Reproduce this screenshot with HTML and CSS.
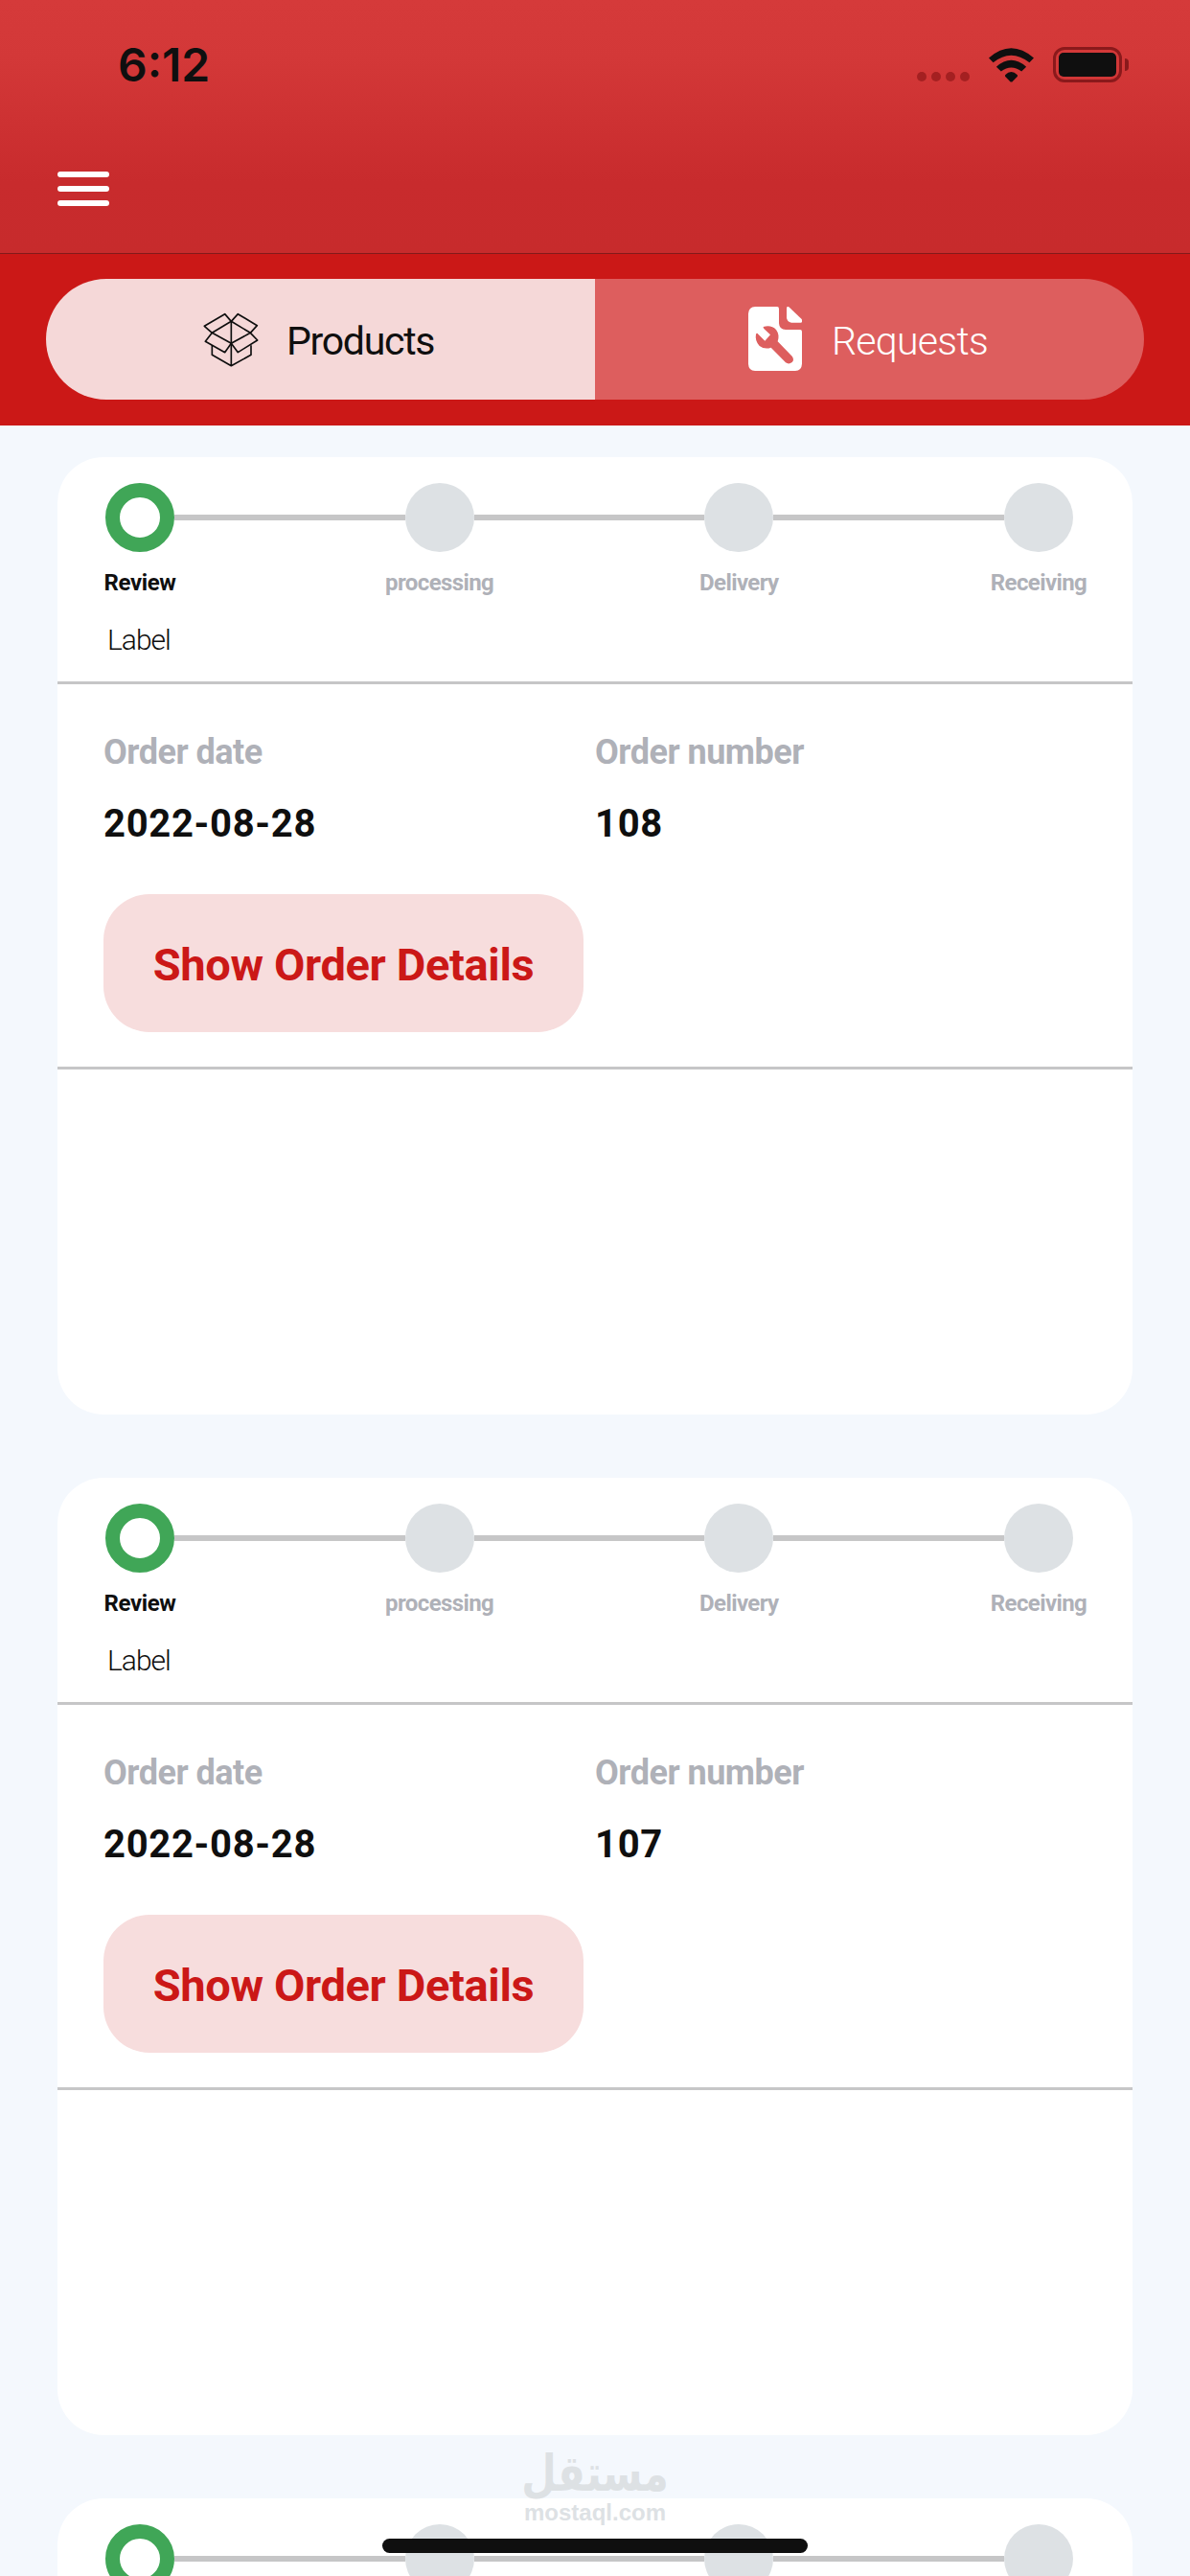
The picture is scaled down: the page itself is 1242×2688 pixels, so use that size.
FILE: index.html
```html
<!DOCTYPE html>
<html lang="en">
<head>
  <meta charset="UTF-8" />
  <meta name="viewport" content="width=device-width, initial-scale=1.0"/>
  <title>Orders</title>
  <link rel="stylesheet" href="styles.css">
</head>
<body>

  <header class="header">
    <div class="status-bar">
      <span class="time">6:12</span>
      <div class="status-icons">
        <div class="dots"><i></i><i></i><i></i><i></i></div>
        <svg class="wifi" viewBox="305 87 143 108">
          <path d="M305 118Q376 56 448 118L434 133Q376 87 319 133Z"/>
          <path d="M329 146Q376 104 424 146L409 161Q376 136 344 161Z"/>
          <path d="M357 172Q376 153 396 172V177L379 194H374L357 177Z"/>
        </svg>
        <div class="battery"><span></span></div>
        <div class="battery-tip"></div>
      </div>
    </div>
    <button class="menu" aria-label="Menu"><span></span><span></span><span></span></button>
  </header>

  <nav class="tab-bar">
    <div class="tabs">
      <div class="tab active">
        <svg class="icon-box" viewBox="64 195 174 171">
          <path d="M152 223L132 200L68 238L92 259ZM152 223L173 200L233 236L212 259ZM92 259L71 286L132 320L152 292ZM212 259L234 282L173 320L152 292Z"/>
          <path d="M92 298V328L152 362L214 328V298M152 223V362"/>
        </svg>
        <span>Products</span>
      </div>
      <div class="tab">
        <svg class="icon-doc" viewBox="123 180 168 201">
          <path d="M145 180H213Q219 180 219 187V232Q220 252 240 252H285Q291 252 291 258V359Q290 380 270 381H144Q124 380 123 359V202Q124 181 145 180Z"/>
          <path d="M243 185Q244 177 250 181L290 219Q294 230 287 230H258Q244 229 243 214Z"/>
          <path class="wrench" d="M170 243Q195 236 210 252Q222 268 215 289L260 335Q268 346 260 354Q250 362 240 355L194 308Q175 315 158 303Q143 286 147 266Q150 261 154 266L175 287L192 268L172 249Q169 245 170 243Z"/>
        </svg>
        <span>Requests</span>
      </div>
    </div>
  </nav>

  <main class="orders">
    <section class="card">
      <div class="progress">
        <div class="steps">
          <div class="step current"><i></i><span>Review</span></div>
          <div class="line"></div>
          <div class="step"><i></i><span>processing</span></div>
          <div class="line"></div>
          <div class="step"><i></i><span>Delivery</span></div>
          <div class="line"></div>
          <div class="step"><i></i><span>Receiving</span></div>
        </div>
        <div class="label">Label</div>
      </div>
      <div class="info">
        <dl>
          <div><dt>Order date</dt><dd>2022-08-28</dd></div>
          <div><dt>Order number</dt><dd>108</dd></div>
        </dl>
        <button class="details">Show Order Details</button>
      </div>
    </section>

    <section class="card">
      <div class="progress">
        <div class="steps">
          <div class="step current"><i></i><span>Review</span></div>
          <div class="line"></div>
          <div class="step"><i></i><span>processing</span></div>
          <div class="line"></div>
          <div class="step"><i></i><span>Delivery</span></div>
          <div class="line"></div>
          <div class="step"><i></i><span>Receiving</span></div>
        </div>
        <div class="label">Label</div>
      </div>
      <div class="info">
        <dl>
          <div><dt>Order date</dt><dd>2022-08-28</dd></div>
          <div><dt>Order number</dt><dd>107</dd></div>
        </dl>
        <button class="details">Show Order Details</button>
      </div>
    </section>

    <section class="card cut">
      <div class="progress">
        <div class="steps">
          <div class="step current"><i></i></div>
          <div class="line"></div>
          <div class="step"><i></i></div>
          <div class="line"></div>
          <div class="step"><i></i></div>
          <div class="line"></div>
          <div class="step"><i></i></div>
        </div>
      </div>
    </section>
  </main>

  <div class="watermark">
    <div class="ar" lang="ar" dir="rtl">مستقل</div>
    <div class="en">mostaql.com</div>
  </div>
  <div class="home-indicator"></div>

</body>
</html>
```
FILE: styles.css
```css
* {
  box-sizing: border-box;
}

body {
  margin: 0;
  height: 2688px;
  overflow: hidden;
  position: relative;
  background: #f4f8fd;
  color: #0f0f0f;
  font-family: Roboto, "Liberation Sans", sans-serif;
}

button {
  border: none;
  padding: 0;
  font-family: inherit;
}

/* header */
.header {
  height: 265px;
  background: linear-gradient(#d53a3a 0, #d33838 60px, #c82b2d 190px, #c72b2c 100%);
  border-bottom: 1px solid #831a1a;
}

.status-bar {
  height: 179px;
  padding: 0 64px 0 123px;
  display: flex;
  justify-content: space-between;
}

.time {
  margin-top: 39px;
  font: 600 48px/58px Inter, "Liberation Sans", sans-serif;
}

.status-icons {
  display: flex;
  align-items: center;
  height: 37px;
  margin-top: 49px;
}

.dots {
  display: flex;
  gap: 5px;
  margin: 25px 20px 0 0;
}

.dots i {
  width: 10px;
  height: 10px;
  border-radius: 50%;
  background: #a42021;
}

.wifi {
  width: 47px;
  height: 36px;
  margin-right: 20px;
  fill: #0f0f0f;
}

.battery {
  width: 72px;
  height: 37px;
  border: 3px solid #8a191b;
  border-radius: 12px;
  padding: 3px;
}

.battery span {
  display: block;
  height: 25px;
  border-radius: 5px;
  background: #0f0f0f;
}

.battery-tip {
  width: 4px;
  height: 13px;
  margin-left: 3px;
  border-radius: 0 4px 4px 0;
  background: #8a191b;
}

.menu {
  display: flex;
  flex-direction: column;
  gap: 9px;
  width: 54px;
  margin-left: 60px;
  background: none;
}

.menu span {
  width: 54px;
  height: 6px;
  border-radius: 3px;
  background: #fff;
}

/* tabs */
.tab-bar {
  height: 179px;
  padding: 26px 48px 27px;
  background: #cb1817;
}

.tabs {
  display: flex;
  height: 126px;
  border-radius: 63px;
  overflow: hidden;
}

.tab {
  width: 50%;
  display: flex;
  align-items: center;
  padding-left: 160px;
  background: #dd5e5e;
  color: #fff;
  font-size: 41px;
  font-weight: 300;
  line-height: 50px;
  letter-spacing: -0.7px;
}

.tab span {
  padding-top: 3px;
}

.tab.active {
  padding-left: 164px;
  background: #f5d8d8;
  color: #0f0f0f;
  font-weight: 400;
  letter-spacing: -1.3px;
}

.icon-box {
  width: 58px;
  height: 57px;
  margin-right: 29px;
  fill: none;
  stroke: #0f0f0f;
  stroke-width: 5;
  stroke-linejoin: round;
}

.icon-doc {
  width: 56px;
  height: 67px;
  margin: 0 31px 2px 0;
  fill: #fff;
}

.icon-doc .wrench {
  fill: #dd5e5e;
}

/* order cards */
.orders {
  display: flex;
  flex-direction: column;
  gap: 66px;
  padding: 33px 60px 0;
}

.card {
  flex: none;
  height: 999px;
  border-radius: 48px;
  background: #fff;
}

.progress {
  height: 237px;
  padding: 27px 62px 0 50px;
  border-bottom: 3px solid #c6c6c7;
}

/* last card, scrolled under the bottom edge */
.card.cut {
  height: 81px;
  border-radius: 48px 48px 0 0;
  overflow: hidden;
}

.cut .progress {
  height: 81px;
  border-bottom: none;
}

.steps {
  display: flex;
}

.line {
  flex: 1;
  height: 6px;
  margin-top: 33px;
  background: #c6c6c7;
}

.step {
  width: 72px;
  display: flex;
  flex-direction: column;
  align-items: center;
  color: #afb1b8;
  font-size: 24px;
  font-weight: 700;
  line-height: 30px;
}

.step i {
  width: 72px;
  height: 72px;
  margin-bottom: 17px;
  border-radius: 50%;
  background: #dde1e4;
}

.step span {
  letter-spacing: -0.6px;
}

.step.current {
  color: #0f0f0f;
}

.current i {
  border: 15px solid #40a657;
  background: #fff;
}

.current span {
  letter-spacing: -0.4px;
}

.label {
  margin: 25px 0 0 2px;
  font-size: 30px;
  font-weight: 300;
  line-height: 40px;
  letter-spacing: -1px;
}

.info {
  height: 402px;
  padding: 50px 48px 0;
  border-bottom: 3px solid #c6c6c7;
}

dl {
  display: grid;
  grid-template-columns: 1fr 1fr;
  height: 169px;
  margin: 0;
}

dt {
  color: #afb1b8;
  font-size: 36px;
  font-weight: 700;
  line-height: 42px;
  letter-spacing: -0.5px;
}

dd {
  margin: 29px 0 0;
  font-size: 40px;
  font-weight: 700;
  line-height: 50px;
  letter-spacing: 0.7px;
}

.details {
  width: 501px;
  height: 144px;
  padding-top: 2px;
  border-radius: 48px;
  background: #f7dddd;
  color: #cb1817;
  font-size: 47px;
  font-weight: 700;
  letter-spacing: -0.35px;
}

/* overlays */
.watermark {
  position: absolute;
  left: 521px;
  top: 2554px;
  width: 200px;
  color: #dde1e4;
  text-align: center;
}

.ar {
  height: 54px;
  font: 700 42px/54px "DejaVu Sans", sans-serif;
  transform: scaleY(1.25);
}

.en {
  font: 700 24px/28px "Liberation Sans", sans-serif;
}

.home-indicator {
  position: absolute;
  left: 399px;
  top: 2649px;
  width: 444px;
  height: 15px;
  border-radius: 8px;
  background: #0f0f0f;
}
```
